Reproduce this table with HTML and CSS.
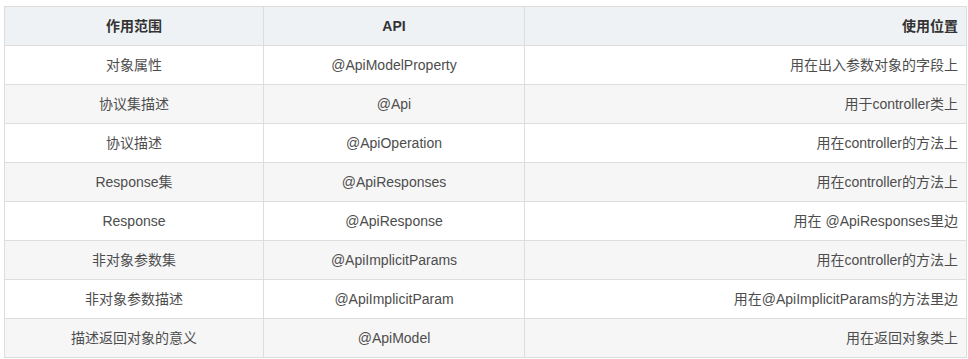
FILE: index.html
```html
<!DOCTYPE html>
<html lang="zh">
<head>
<meta charset="utf-8">
<link rel="stylesheet" href="styles.css">
</head>
<body>
<div class="wrap">
<table class="api-table">
  <colgroup>
    <col class="c1">
    <col class="c2">
    <col class="c3">
  </colgroup>
  <thead>
    <tr><th class="center">作用范围</th><th class="center">API</th><th class="right">使用位置</th></tr>
  </thead>
  <tbody>
    <tr><td class="center">对象属性</td><td class="center">@ApiModelProperty</td><td class="right">用在出入参数对象的字段上</td></tr>
    <tr><td class="center">协议集描述</td><td class="center">@Api</td><td class="right">用于controller类上</td></tr>
    <tr><td class="center">协议描述</td><td class="center">@ApiOperation</td><td class="right">用在controller的方法上</td></tr>
    <tr><td class="center">Response集</td><td class="center">@ApiResponses</td><td class="right">用在controller的方法上</td></tr>
    <tr><td class="center">Response</td><td class="center">@ApiResponse</td><td class="right">用在 @ApiResponses里边</td></tr>
    <tr><td class="center">非对象参数集</td><td class="center">@ApiImplicitParams</td><td class="right">用在controller的方法上</td></tr>
    <tr><td class="center">非对象参数描述</td><td class="center">@ApiImplicitParam</td><td class="right">用在@ApiImplicitParams的方法里边</td></tr>
    <tr><td class="center">描述返回对象的意义</td><td class="center">@ApiModel</td><td class="right">用在返回对象类上</td></tr>
  </tbody>
</table>
</div>
</body>
</html>
```
FILE: styles.css
```css
html, body {
  margin: 0;
  padding: 0;
  background: #fff;
}
.wrap {
  padding: 6px 0 0 4px;
}
.api-table {
  border-collapse: collapse;
  table-layout: fixed;
  width: 962px;
  font-family: "Liberation Sans", Arial, "Noto Sans CJK SC", sans-serif;
  font-size: 14px;
  color: #4d4d4d;
}
.c1 { width: 259px; }
.c2 { width: 261px; }
.c3 { width: 442px; }
.api-table th,
.api-table td {
  border: 1px solid #dddddd;
  height: 39px;
  padding: 0 8px;
  box-sizing: border-box;
  line-height: 20px;
  vertical-align: middle;
  white-space: nowrap;
}
.api-table th {
  background: #eff2f5;
  font-weight: bold;
  color: #333;
}
.api-table tbody tr:nth-child(even) td {
  background: #f6f6f6;
}
.center { text-align: center; }
.right { text-align: right; }
```
